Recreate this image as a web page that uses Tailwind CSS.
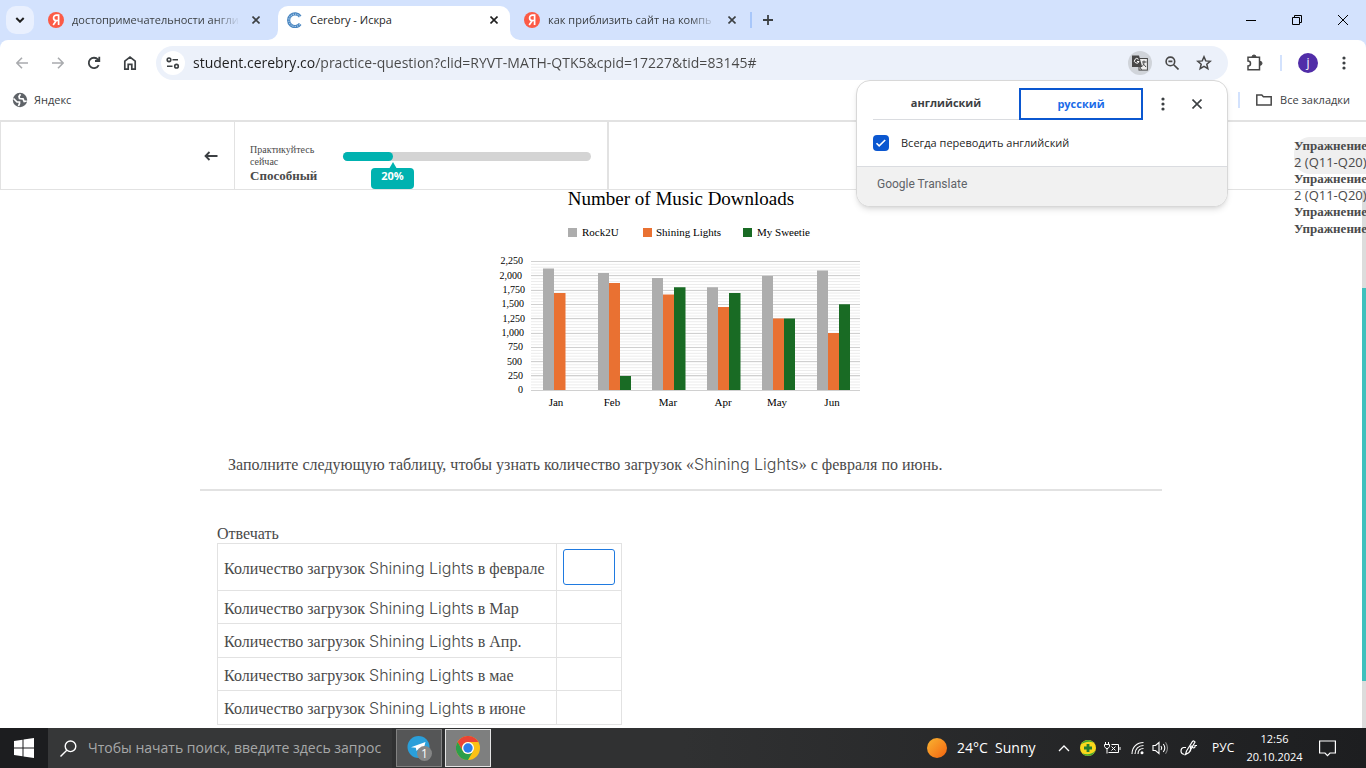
<!DOCTYPE html>
<html lang="ru">
<head>
<meta charset="utf-8">
<title>Cerebry - Искра</title>
<script src="https://cdn.jsdelivr.net/npm/@tailwindcss/browser@4"></script>
</head>
<body class="flex h-screen flex-col overflow-hidden bg-white font-['Open_Sans',sans-serif] text-[11px] text-[#1f1f1f]">

<!-- Tab strip -->
<header class="flex h-10 shrink-0 bg-[#d3e2fd]">
  <button aria-label="Поиск вкладок" class="mt-1.5 ml-1.5 grid h-7 w-7 shrink-0 place-items-center rounded-[10px] bg-[#e9f0fe]">
    <svg width="10" height="6" viewBox="0 0 10 6" fill="none" stroke="#1f1f1f" stroke-width="2"><path d="M1.300 1l3.700 3.700L8.700 1"/></svg>
  </button>
  <div class="flex h-10 w-[244px] shrink-0 items-center pr-3.5 pl-3.5">
    <svg class="shrink-0" width="16" height="16" viewBox="0 0 16 16"><circle cx="8" cy="8" r="8" fill="#fc5b46"/><path d="M10.600 13V3.200H8.600C6.800 3.200 5.600 4.300 5.600 5.900s1 2.600 2.700 2.600h2.300M8.300 8.500L5.200 13" fill="none" stroke="#fff" stroke-width="1.700"/></svg>
    <span class="ml-2 min-w-0 flex-1 whitespace-nowrap text-[#3c4043] [mask-image:linear-gradient(to_right,#000_85%,transparent)]">достопримечательности англи</span>
    <button aria-label="Закрыть" class="ml-2 grid h-4 w-4 shrink-0 place-items-center"><svg width="8" height="8" viewBox="0 0 8 8" stroke="#3c4043" stroke-width="1.600"><path d="M.5.5l7 7M7.500.5l-7 7"/></svg></button>
  </div>
  <div class="relative mt-1.5 flex h-[34px] w-[232px] shrink-0 items-center rounded-t-[10px] bg-white pr-2 pb-1.5 pl-2">
    <svg class="absolute bottom-0 -left-2.5" width="10" height="10"><path d="M10 0v10H0A10 10 0 0 0 10 0" fill="#fff"/></svg>
    <svg class="absolute -right-2.5 bottom-0" width="10" height="10"><path d="M0 0v10h10A10 10 0 0 1 0 0" fill="#fff"/></svg>
    <svg class="shrink-0" width="16" height="16" viewBox="0 0 16 16" fill="none"><path d="M14.200 4.500A6.400 6.400 0 1 0 14.200 12" stroke="#4a86c0" stroke-width="3.200"/><path d="M14 4.600A6.200 6.200 0 1 0 14 12" stroke="#a9cbea" stroke-width="1.200" stroke-dasharray="1.200 1"/></svg>
    <span class="ml-2 flex-1 whitespace-nowrap">Cerebry - Искра</span>
    <button aria-label="Закрыть" class="grid h-4 w-4 shrink-0 place-items-center"><svg width="8" height="8" viewBox="0 0 8 8" stroke="#1f1f1f" stroke-width="1.600"><path d="M.5.5l7 7M7.500.5l-7 7"/></svg></button>
  </div>
  <div class="flex h-10 w-[240px] shrink-0 items-center pr-2.5 pl-3.5">
    <svg class="shrink-0" width="16" height="16" viewBox="0 0 16 16"><circle cx="8" cy="8" r="8" fill="#fc5b46"/><path d="M10.600 13V3.200H8.600C6.800 3.200 5.600 4.300 5.600 5.900s1 2.600 2.700 2.600h2.300M8.300 8.500L5.200 13" fill="none" stroke="#fff" stroke-width="1.700"/></svg>
    <span class="ml-2 min-w-0 flex-1 whitespace-nowrap text-[#3c4043] [mask-image:linear-gradient(to_right,#000_85%,transparent)]">как приблизить сайт на компь</span>
    <button aria-label="Закрыть" class="ml-2 grid h-4 w-4 shrink-0 place-items-center"><svg width="8" height="8" viewBox="0 0 8 8" stroke="#3c4043" stroke-width="1.600"><path d="M.5.5l7 7M7.500.5l-7 7"/></svg></button>
  </div>
  <span class="mt-3 h-4 w-0.5 bg-[#a8c7fa]"></span>
  <button aria-label="Новая вкладка" class="ml-2 grid h-10 w-4 place-items-center"><svg width="10" height="10" stroke="#3c4043" stroke-width="1.800"><path d="M5 0v10M0 5h10"/></svg></button>
  <div class="ml-auto flex">
    <button aria-label="Свернуть" class="grid w-[46px] place-items-center"><svg width="10" height="10" stroke="#000"><path d="M0 5.500h10"/></svg></button>
    <button aria-label="Окно" class="grid w-[46px] place-items-center"><svg width="10" height="10" fill="none" stroke="#000"><path d="M.5 2.500h7v7h-7zM2.500 2.500v-2h7v7h-2"/></svg></button>
    <button aria-label="Закрыть окно" class="grid w-[46px] place-items-center"><svg width="10" height="10" stroke="#000"><path d="M0 0l10 10M10 0L0 10"/></svg></button>
  </div>
</header>

<!-- Toolbar -->
<div class="shrink-0 bg-[#d3e2fd]">
<nav class="flex h-[46px] items-center rounded-t-lg bg-white pr-2.5">
  <div class="flex w-[156px] shrink-0 pl-1">
    <button aria-label="Назад" class="grid h-9 w-9 place-items-center"><svg width="12" height="12" fill="none" stroke="#a9abae" stroke-width="1.600"><path d="M12 6H1M6 .7L.8 6 6 11.300"/></svg></button>
    <button aria-label="Вперёд" class="grid h-9 w-9 place-items-center"><svg width="12" height="12" fill="none" stroke="#a9abae" stroke-width="1.600"><path d="M0 6h11M6 .7L11.200 6 6 11.300"/></svg></button>
    <button aria-label="Обновить" class="grid h-9 w-9 place-items-center"><svg width="14" height="14" fill="none" stroke="#3c4043" stroke-width="1.800"><path d="M11.700 9.200A5.200 5.200 0 1 1 11 3.600L12.300 5M12.300.7V5H8"/></svg></button>
    <button aria-label="Домой" class="grid h-9 w-9 place-items-center"><svg width="14" height="16" fill="none" stroke="#3c4043" stroke-width="1.700"><path d="M1.800 6.200L7 2.100l5.200 4.100v7.900H8.800V9.300H5.200v4.800H1.800z"/></svg></button>
  </div>
  <div class="flex h-[34px] flex-1 items-center rounded-full bg-[#ecf1fa] pr-3 pl-[5px]">
    <button aria-label="Сведения о сайте" class="grid h-6 w-6 place-items-center rounded-full bg-white"><svg width="14" height="12" fill="none" stroke="#3c4043" stroke-width="1.600"><circle cx="3" cy="2.800" r="1.800"/><path d="M6.500 2.800h5.500M1 9.200h5.500"/><circle cx="10.500" cy="9.200" r="1.800"/></svg></button>
    <input aria-label="Адрес" class="ml-2 min-w-0 flex-1 bg-[linear-gradient(to_right,#1f1f1f_123px,#474747_123px)] bg-clip-text text-sm text-transparent outline-none" value="student.cerebry.co/practice-question?clid=RYVT-MATH-QTK5&amp;cpid=17227&amp;tid=83145#">
    <button aria-label="Перевести" class="grid h-6 w-6 place-items-center rounded-full bg-[#d0d4da]"><svg width="16" height="16"><rect x="7" y="3.500" width="8.400" height="11.600" fill="#eee" stroke="#474747"/><path d="M0 .5h7l3.200 11.500H0z" fill="#474747"/><path d="M6.500 4.300a2.300 2.300 0 1 0 .5 2.200H5" fill="none" stroke="#fff"/><path d="M10 7h4.500M12 5.500V7c0 2-1 3.500-2 4.500M11 8.500l3 3.500M8 12l1.500 3" fill="none" stroke="#474747"/></svg></button>
    <button aria-label="Масштаб" class="ml-2 grid h-6 w-6 place-items-center"><svg width="14" height="14" fill="none" stroke="#474747" stroke-width="1.600"><circle cx="5.400" cy="5.400" r="4.300"/><path d="M8.700 8.700l4.800 4.800M3.400 5.400h4"/></svg></button>
    <button aria-label="В закладки" class="ml-2 grid h-6 w-6 place-items-center"><svg width="16" height="16" fill="none" stroke="#474747" stroke-width="1.500"><path d="M8 1.800l1.750 4.100 4.450.4-3.400 2.900 1.050 4.400L8 11.300l-3.850 2.300L5.200 9.200 1.800 6.300l4.450-.4z"/></svg></button>
  </div>
  <button aria-label="Расширения" class="ml-[15px] grid h-6 w-6 place-items-center"><svg width="18" height="18" fill="none" stroke="#474747" stroke-width="1.500"><path d="M2 3.200h11.500v12.600H2V12a2.400 2.400 0 0 0 0-5z"/><path d="M6 3a2 2 0 0 1 4 0M14 7.300a2 2 0 0 1 0 4" fill="#474747" stroke-width="1"/></svg></button>
  <span class="ml-[13px] h-4 w-0.5 bg-[#d3e2fd]"></span>
  <button aria-label="Профиль" class="ml-4 grid h-5 w-5 place-items-center rounded-full bg-[#512da8] text-xs text-white">j</button>
  <button aria-label="Меню" class="ml-3.5 grid h-6 w-6 place-items-center"><svg width="4" height="14" fill="#3c4043"><circle cx="2" cy="2" r="1.600"/><circle cx="2" cy="7" r="1.600"/><circle cx="2" cy="12" r="1.600"/></svg></button>
</nav>
</div>
<div class="flex h-[34px] shrink-0 items-center bg-white px-3 pb-1.5">
  <a href="#" class="flex items-center gap-1.5 text-[#3c4043]"><svg width="16" height="16" viewBox="0 0 16 16"><circle cx="8" cy="8" r="7.200" fill="#5f6368"/><path d="M1.500 6.500L5 10h2.500v1.500L6.500 14M8.500 2.200L7 4.500l.5 2 3.500.3 1.200 2.700 2.500-.5" fill="none" stroke="#fff" stroke-width="1.700"/></svg>Яндекс</a>
  <span class="mr-4 ml-auto h-4 w-0.5 bg-[#d3e2fd]"></span>
  <a href="#" class="mr-1 flex items-center gap-2 text-[#3c4043]"><svg width="16" height="12" fill="none" stroke="#474747" stroke-width="1.500"><path d="M.8 1h5l1.600 1.800h7.800V11H.8z"/></svg>Все закладки</a>
</div>

<!-- Page -->
<main class="relative flex min-h-0 flex-1 flex-col overflow-hidden border-t-2 border-[#e2e2e2] bg-white font-['Liberation_Serif',serif] text-[#4a4a4a]">
  <section class="flex h-[68px] shrink-0 border-b border-l border-[#e2e2e2]">
    <div class="flex w-[234px] shrink-0 items-center justify-end border-r border-[#e2e2e2] pr-4"><a href="#" aria-label="Назад"><svg width="14" height="10" fill="none" stroke="#3c4043" stroke-width="1.800"><path d="M13.500 5H1.500M5.500 1l-4 4 4 4"/></svg></a></div>
    <div class="flex w-[374px] shrink-0 border-r-2 border-[#e2e2e2] pr-4 pl-[15px]">
      <div class="w-[93px] pt-[22px] text-[10px] leading-3"><p class="w-[70px]">Практикуйтесь сейчас</p><p class="text-[13px] leading-4 font-bold">Способный</p></div>
      <div class="relative mt-[30px] h-[9px] flex-1 rounded-full bg-[#d4d4d4]">
        <div class="h-full rounded-full bg-[#00b2b0]" style="width:20%"></div>
        <div class="absolute top-4 left-7 h-[21px] w-[43px] rounded bg-[#00b2b0] text-center font-['Open_Sans',sans-serif] text-[11px] leading-4 font-bold text-white"><svg class="absolute -top-1.5 left-[18px]" width="8" height="7"><path d="M0 7l4-7 4 7z" fill="#00b2b0"/></svg>20%</div>
      </div>
    </div>
  </section>

  <svg class="ml-[480px] h-[226px] w-[400px] shrink-0 overflow-visible" viewBox="480 190 400 226" font-family="Liberation Serif, serif" font-size="10" fill="#000" role="img" aria-label="Number of Music Downloads">
    <defs><pattern id="minor" width="10" height="2.870" patternUnits="userSpaceOnUse" y="261"><path d="M0 .5h10" stroke="#ebebeb"/></pattern></defs>
    <text x="681" y="205" font-size="19" text-anchor="middle">Number of Music Downloads</text>
    <g font-size="11"><text x="582" y="236">Rock2U</text><text x="656" y="236">Shining Lights</text><text x="757" y="236">My Sweetie</text></g>
    <path d="M568 228h9v9h-9z" fill="#adadad"/><path d="M643 228h9v9h-9z" fill="#e97132"/><path d="M743 228h9v9h-9z" fill="#196b24"/>
    <path d="M531 261h329v129H531z" fill="url(#minor)"/>
    <path d="M531 261.500h329M531 275.500h329M531 290.500h329M531 304.500h329M531 318.500h329M531 333.500h329M531 347.500h329M531 361.500h329M531 375.500h329M531 390.500h329" stroke="#d0d0d0"/>
    <g fill="#adadad"><path d="M543 268.600h11V390h-11zM598 273h11v117h-11zM652 278h11v112h-11zM707 287.300h11V390h-11zM762 276h11v114h-11zM817 270.500h11V390h-11z"/></g>
    <g fill="#e97132"><path d="M554 293h11.500v97H554zM609 283h11v107h-11zM663 294.500h11V390h-11zM718 307h11v83h-11zM773 318.500h11V390h-11zM828 333h11v57h-11z"/></g>
    <g fill="#196b24"><path d="M620 376h11v14h-11zM674 287.300h11.500V390H674zM729 293h11.500v97H729zM784 318.500h11V390h-11zM839 304.300h11V390h-11z"/></g>
    <g text-anchor="end"><text x="523" y="264">2,250</text><text x="522" y="279">2,000</text><text x="525" y="293">1,750</text><text x="524" y="307">1,500</text><text x="525" y="322">1,250</text><text x="524" y="336">1,000</text><text x="523" y="350">750</text><text x="522" y="365">500</text><text x="523" y="379">250</text><text x="523" y="393">0</text></g>
    <g font-size="11" text-anchor="middle"><text x="556" y="406">Jan</text><text x="612" y="406">Feb</text><text x="668" y="406">Mar</text><text x="723" y="406">Apr</text><text x="777" y="406">May</text><text x="832" y="406">Jun</text></g>
  </svg>

  <p class="mt-[38px] ml-[228px] shrink-0 text-base leading-5 whitespace-nowrap">Заполните следующую таблицу, чтобы узнать количество загрузок «<span class="font-['Inter',sans-serif] font-light">Shining Lights</span>» с февраля по июнь.</p>
  <hr class="mt-3.5 mr-[204px] ml-[200px] shrink-0 border-t-2 border-[#e2e2e2]">
  <section class="mt-[33px] ml-[217px] shrink-0 text-base leading-5">
    <h2 id="answer" class="h-[19px]">Отвечать</h2>
    <table aria-labelledby="answer" class="w-[405px] table-fixed border-collapse whitespace-nowrap [&_td]:border [&_td]:border-[#e2e2e2] [&_th]:border [&_th]:border-[#e2e2e2] [&_th]:px-1.5 [&_th]:pt-0.5 [&_th]:text-left [&_th]:font-normal [&_th_span]:font-['Inter',sans-serif] [&_th_span]:font-light">
      <tr class="h-[47px]"><th class="w-[339px]"><label for="feb">Количество загрузок <span>Shining Lights</span> в феврале</label></th><td class="px-1.5"><input id="feb" class="block h-9 w-full rounded-[3px] border border-[#1f7ae0] bg-white outline-none"></td></tr>
      <tr class="h-[33px]"><th>Количество загрузок <span>Shining Lights</span> в Мар</th><td></td></tr>
      <tr class="h-[34px]"><th>Количество загрузок <span>Shining Lights</span> в Апр.</th><td></td></tr>
      <tr class="h-[33px]"><th>Количество загрузок <span>Shining Lights</span> в мае</th><td></td></tr>
      <tr class="h-[34px]"><th>Количество загрузок <span>Shining Lights</span> в июне</th><td></td></tr>
    </table>
  </section>

  <div class="absolute top-[68px] right-0 bottom-0 w-1 bg-[#dcdcdc]"><div class="mt-[98px] h-[393px] bg-[#3fc1bd]"></div></div>
  <!-- Exercise list drawer, mostly off-screen -->
  <aside class="absolute top-[15px] right-0 w-[72px] text-[13px] leading-[17px] font-bold whitespace-nowrap [&_span]:block [&_span]:font-['Open_Sans',sans-serif] [&_span]:text-[13px] [&_span]:font-normal">
    <p class="h-[37px] rounded-l-2xl bg-[#efefef]">Упражнение<span>2 (Q11-Q20)</span></p>
    <p class="-mt-1 h-[33px]">Упражнение<span>2 (Q11-Q20)</span></p>
    <p>Упражнение</p><p>Упражнение</p>
  </aside>
</main>

<!-- Translate popup -->
<section class="absolute top-20 right-[138px] w-[372px] overflow-hidden rounded-[14px] border border-[#d8d8d8] bg-white shadow-md">
  <div class="flex h-[39px] items-end pl-4">
    <button class="h-8 w-[146px] border-b border-[#dadce0] font-bold text-[#3c4043]">английский</button>
    <button class="h-8 w-[124px] shrink-0 border-2 border-[#0b57d0] font-bold text-[#1a6be8]">русский</button>
    <button aria-label="Параметры" class="ml-2 grid h-8 w-6 place-items-center"><svg width="4" height="14" fill="#3c4043"><circle cx="2" cy="2" r="1.600"/><circle cx="2" cy="7" r="1.600"/><circle cx="2" cy="12" r="1.600"/></svg></button>
    <button aria-label="Закрыть перевод" class="ml-2.5 grid h-8 w-6 place-items-center"><svg width="10" height="10" stroke="#3c4043" stroke-width="1.600"><path d="M.5.5l9 9M9.500.5l-9 9"/></svg></button>
  </div>
  <div class="flex h-[46px] items-center pl-4"><span class="grid h-4 w-4 place-items-center"><input id="always" type="checkbox" checked class="col-start-1 row-start-1 h-4 w-4 appearance-none rounded-sm bg-[#0b57d0]"><svg class="pointer-events-none col-start-1 row-start-1" width="12" height="10" fill="none" stroke="#fff" stroke-width="1.600"><path d="M1.500 5.200l2.700 2.700L10.200 2"/></svg></span><label for="always" class="ml-3">Всегда переводить английский</label></div>
  <p class="h-10 border-t border-[#dadce0] bg-[#f1f1f1] pt-[9px] pl-5 font-['Roboto',sans-serif] text-xs leading-4 text-[#5f6368]">Google Translate</p>
</section>

<!-- Taskbar -->
<footer class="flex h-10 shrink-0 items-center bg-linear-to-r from-[#303132] via-[#303132] to-[#1d1e20] text-white">
  <button aria-label="Пуск" class="grid h-10 w-12 place-items-center bg-[#1c1d1f]"><svg width="20" height="20" fill="#fff"><path d="M0 3l8.500-1.200v7.700H0zM9.500 1.600L20 0v9.500H9.500zM0 10.500h8.500v7.700L0 17zM9.500 10.500H20V20L9.500 18.400z"/></svg></button>
  <label class="flex h-10 w-[344px] items-center bg-[#363738] pl-3"><svg class="shrink-0" width="17" height="17" fill="none" stroke="#fff" stroke-width="1.400"><circle cx="10.500" cy="6.300" r="5.300"/><path d="M6.800 10.300L.5 16.500"/></svg><input aria-label="Поиск" class="ml-[11px] w-[302px] bg-transparent text-sm outline-none placeholder:text-[#a6a8a8]" placeholder="Чтобы начать поиск, введите здесь запрос"></label>
  <button aria-label="Telegram" class="ml-1 grid h-[38px] w-[46px] place-items-center border border-[#828282] bg-[#555657]"><svg width="26" height="26"><circle cx="12.500" cy="12" r="11" fill="#2a9fda"/><path d="M5 12.200L19.500 7l-2.700 10-4.300-3-2 2-.7-3.200z" fill="#fff"/><circle cx="18.500" cy="18.500" r="7.500" fill="#858686"/><text x="18.500" y="23" font-size="12" text-anchor="middle" fill="#fff">1</text></svg></button>
  <button aria-label="Chrome" class="ml-[3px] grid h-[38px] w-[46px] place-items-center border border-[#e4e4e4] bg-[#7e7f7f]"><svg width="24" height="24" viewBox="0 0 24 24"><circle cx="12" cy="12" r="12" fill="#fbc116"/><path d="M1.600 6A12 12 0 0 1 22.400 6H12a6 6 0 0 0-5.200 9z" fill="#ea4335"/><path d="M1.600 6A12 12 0 0 0 12 24l5.200-9A6 6 0 0 1 6.800 15z" fill="#2c9e4b"/><circle cx="12" cy="12" r="6" fill="#fff"/><circle cx="12" cy="12" r="4.700" fill="#2b7de9"/></svg></button>
  <div class="ml-auto flex items-center pr-[30px]">
    <span class="h-5 w-5 rounded-full bg-linear-to-br from-[#f7b432] to-[#f2600c]"></span>
    <span class="ml-2.5 w-[101px] text-sm whitespace-pre">24°C  Sunny</span>
    <svg width="12" height="8" fill="none" stroke="#fff" stroke-width="1.300"><path d="M1 7l5-5 5 5"/></svg>
    <svg class="ml-2.5" width="16" height="16"><circle cx="8" cy="8" r="8" fill="#f9d81c"/><path d="M1 4.200A8 8 0 0 1 14 2.800C9 .8 5 2 1 4.200zM2 13.200A8 8 0 0 0 15.500 10.500C12 14.500 7 15.200 2 13.200z" fill="#3fa535"/><path d="M8 4v8M4 8h8" stroke="#237c2f" stroke-width="2.800"/></svg>
    <svg class="ml-2" width="17" height="14" fill="none" stroke="#fff"><path d="M1.500 1v2.500M4.500 1v2.500M.5 3.500h5v2l-1.500 2H2l-1.500-2zM3 7.500v5M7.500 3.500h7v8h-10M16 6v3M7.500 5.500l4 4M11.500 5.500l-4 4"/></svg>
    <svg class="ml-[10px]" width="13" height="14" fill="none" stroke="#fff" stroke-width="1.100"><path d="M1 13C1 6 6 1.500 12.500 1.500M4 13c0-5 3.500-8.500 8.500-8.500M7 13c0-3.500 2-5.500 5.500-5.500"/><circle cx="11" cy="11.800" r="1.500" fill="#fff" stroke="none"/></svg>
    <svg class="ml-2" width="17" height="14" fill="none" stroke="#fff" stroke-width="1.100"><path d="M1 4.500h2.500L7 1.500v11L3.500 9.500H1zM9 5q1.500 2 0 4M11.300 3q3 4 0 8"/><path d="M13.500 1.200q4 5.800 0 11.600" stroke="#888"/></svg>
    <svg class="ml-[11px]" width="18" height="16" fill="none" stroke="#fff" stroke-width="1.200"><path d="M6.500 11L12.500 1.500q1.500-1.300 2.500.5L9 12.500l-3.500 2zM6 7.500H3.500Q1 8 1 11t3.500 3.500M10.500 11.500V7q1-2 2 0t2.500 0V5.500h2"/></svg>
    <span class="ml-[14px] w-[24px] text-xs">РУС</span>
    <p class="ml-2.5 w-[57px] text-center text-[11px] leading-[18px] whitespace-nowrap">12:56<br>20.10.2024</p>
    <svg class="ml-4" width="17" height="17" fill="none" stroke="#fff" stroke-width="1.200"><path d="M.6 1h15.800v12H11l-2.500 2.700L6 13H.6z"/></svg>
  </div>
</footer>
</body>
</html>
